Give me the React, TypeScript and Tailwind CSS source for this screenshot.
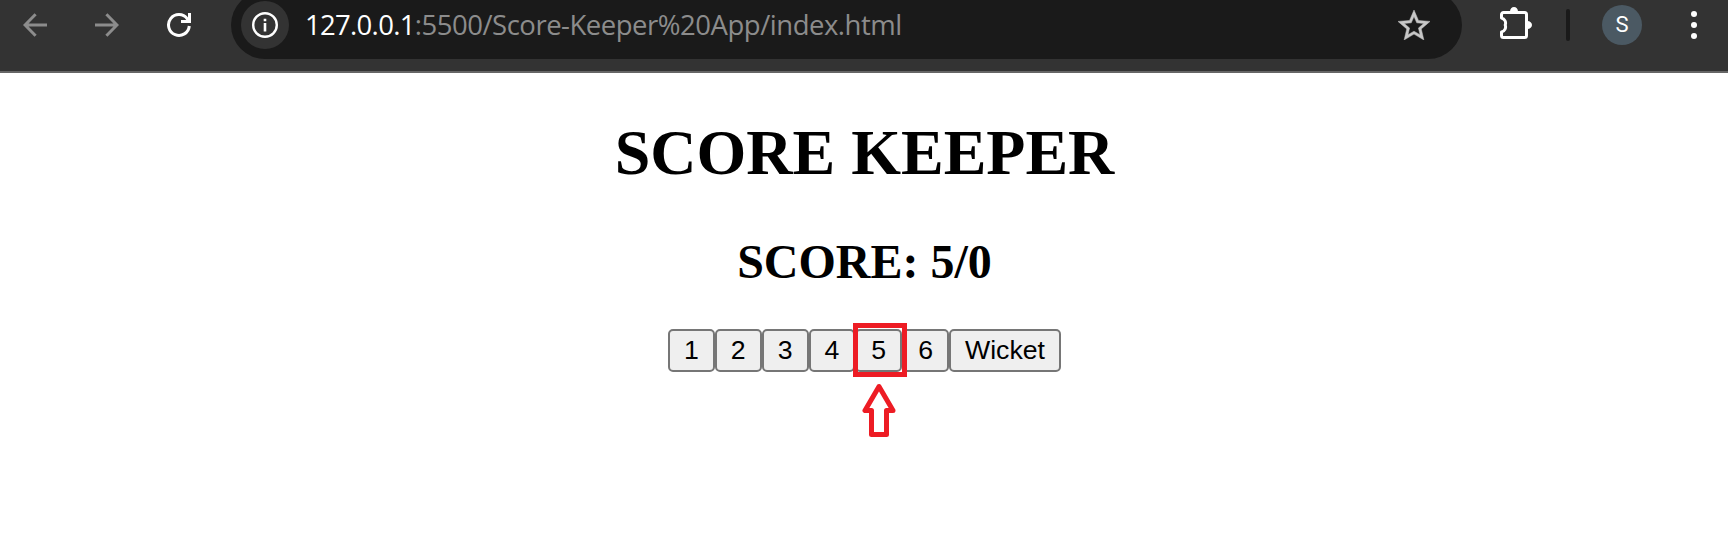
import React from "react";

function BackIcon() {
  return (
    <svg width="24" height="24" viewBox="0 0 24 24" fill="none" stroke="#8c8c8c" strokeWidth="3" className="shrink-0">
      <path d="M24 12H2.5M12.6 1.2L2 12l10.6 10.8" />
    </svg>
  );
}

function ForwardIcon() {
  return (
    <svg width="24" height="24" viewBox="0 0 24 24" fill="none" stroke="#8c8c8c" strokeWidth="3" className="shrink-0">
      <path d="M0 12h21.5M11.4 1.2L22 12 11.4 22.8" />
    </svg>
  );
}

function ReloadIcon() {
  return (
    <svg width="24" height="24" viewBox="0 0 24 24" fill="none" stroke="#fff" strokeWidth="3" className="shrink-0">
      <path d="M22.3 13A10.4 10.4 0 1 1 20.3 5.8L22 8.2" />
      <path d="M22.5 0v8.5H14" />
    </svg>
  );
}

function InfoIcon() {
  return (
    <svg width="26" height="26" viewBox="0 0 26 26">
      <circle cx="13" cy="13" r="11.8" fill="none" stroke="#fff" strokeWidth="2.4" />
      <path d="M11.7 6.7h2.6v2.6h-2.6zM11.7 11h2.6v8.6h-2.6z" fill="#fff" />
    </svg>
  );
}

function StarIcon() {
  return (
    <svg width="32" height="30" viewBox="2 2 20 19" preserveAspectRatio="none">
      <path
        fill="#c7c7c7"
        stroke="#c7c7c7"
        strokeWidth="0.3"
        d="M22 9.24l-7.19-.62L12 2 9.19 8.63 2 9.24l5.46 4.73L5.82 21 12 17.27 18.18 21l-1.63-7.03L22 9.24zM12 15.4l-3.76 2.27 1-4.28-3.32-2.88 4.38-.38L12 6.1l1.71 4.04 4.38.38-3.32 2.88 1 4.28L12 15.4z"
      />
    </svg>
  );
}

function PuzzleIcon() {
  return (
    <svg width="32" height="32" viewBox="0 0 32 32" className="-mt-1 shrink-0">
      <path
        d="M1.5 11V7.5a2 2 0 0 1 2-2h21a2 2 0 0 1 2 2v21a2 2 0 0 1-2 2h-21a2 2 0 0 1-2-2V25A5.2 5.2 0 0 0 5.2 18 5.2 5.2 0 0 0 1.5 11z"
        fill="none"
        stroke="#fff"
        strokeWidth="3"
        strokeLinejoin="round"
      />
      <path d="M10 4.5a4 4.5 0 0 1 8 0zM27.5 14a4.5 4 0 0 1 0 8z" fill="#fff" />
    </svg>
  );
}

function Toolbar() {
  return (
    <header className="h-[73px] w-full overflow-hidden border-b-2 border-[#666666] bg-[#333333]">
      <div className="flex h-[50px] items-center">
        <div className="ml-[23px] flex shrink-0 gap-12">
          <BackIcon />
          <ForwardIcon />
          <ReloadIcon />
        </div>
        <div className="ml-10 flex h-[68px] w-[1231px] shrink-0 items-center rounded-full bg-[#1a1a1a] pr-8 pl-[10px]">
          <span className="flex size-12 shrink-0 items-center justify-center rounded-full bg-[#333333]">
            <InfoIcon />
          </span>
          <p className="ml-4 flex-1 whitespace-nowrap font-['Open_Sans','Noto_Sans',sans-serif] text-[27.5px] leading-none text-[#8c8c8c]">
            <span className="tracking-[-0.7px] text-white">127.0.0.1</span>
            <span className="tracking-[-0.48px]">:5500/Score-Keeper%20App/index.html</span>
          </p>
          <StarIcon />
        </div>
        <div className="ml-[38px] shrink-0">
          <PuzzleIcon />
        </div>
        <span className="ml-[34px] h-8 w-1 shrink-0 rounded-full bg-[#1a1a1a]" />
        <span className="ml-8 flex size-10 shrink-0 items-center justify-center rounded-full bg-[#4b5963] font-[Roboto,sans-serif] text-[22px] leading-none text-white">
          S
        </span>
        <svg width="6" height="28" viewBox="0 0 6 28" fill="#fff" className="ml-[49px] shrink-0">
          <circle cx="3" cy="3" r="3" />
          <circle cx="3" cy="14" r="3" />
          <circle cx="3" cy="25" r="3" />
        </svg>
      </div>
    </header>
  );
}

function Highlight() {
  return (
    <>
      <span className="absolute -top-[6px] -left-[2px] z-10 h-[54px] w-[54px] border-[5px] border-[#ed1c24]" />
      <svg
        width="34"
        height="56"
        viewBox="0 0 34 56"
        fill="none"
        stroke="#ed1c24"
        strokeWidth="5"
        strokeLinejoin="round"
        className="absolute top-[54px] left-[7px] z-10"
      >
        <path d="M17 3.5L3 27.5H9.5V51.5H24.5V27.5H31z" />
      </svg>
    </>
  );
}

const runs = ["1", "2", "3", "4", "5", "6"];

export default function App() {
  return (
    <div className="h-[548px] w-full overflow-hidden bg-white text-black">
      <Toolbar />
      <main className="flex flex-col items-center pl-px">
        <h1 className="mt-[43px] font-['Liberation_Serif',serif] text-[64px] leading-[74px] font-bold">SCORE KEEPER</h1>
        <h2 className="mt-11 font-['Liberation_Serif',serif] text-[48px] leading-[56px] font-bold">SCORE: 5/0</h2>
        <div className="mt-[39px] flex font-['Liberation_Sans',sans-serif] text-[26.67px] leading-[30px]">
          {runs.map((run) => (
            <div key={run} className="relative">
              <button className="h-[43px] rounded-[5px] border-2 border-[#767676] bg-[#efefef] px-[14px] pb-[2px]">{run}</button>
              {run === "5" && <Highlight />}
            </div>
          ))}
          <button className="h-[43px] rounded-[5px] border-2 border-[#767676] bg-[#efefef] px-[14px] pb-[2px]">Wicket</button>
        </div>
      </main>
    </div>
  );
}
